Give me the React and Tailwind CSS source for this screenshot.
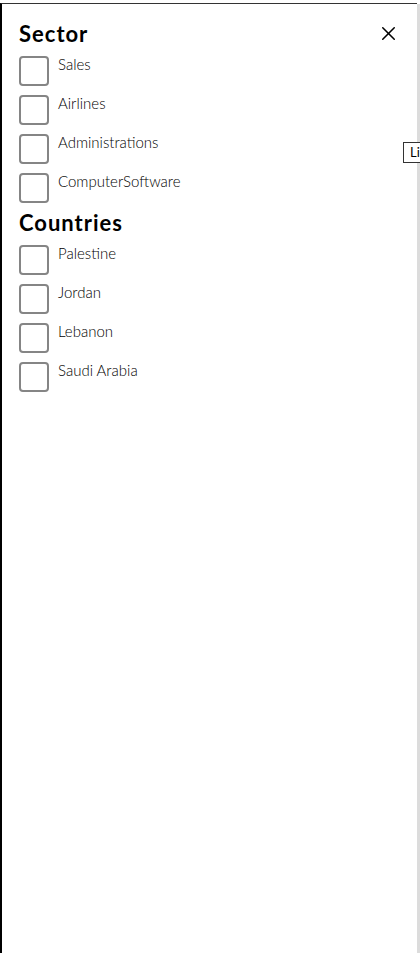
import { X } from "lucide-react";

const sectors = ["Sales", "Airlines", "Administrations", "ComputerSoftware"];
const countries = ["Palestine", "Jordan", "Lebanon", "Saudi Arabia"];

const CheckRow = ({ label }) => (
  <label className="flex items-start gap-[9px] h-[30px]">
    <span className="w-[30px] h-[30px] shrink-0 rounded-[4px] border-2 border-[#858585] bg-white" />
    <span className="text-[15px] leading-[16px] font-light text-black">{label}</span>
  </label>
);

const Group = ({ title, items }) => (
  <div>
    <h2 className="text-[22px] leading-[26px] font-bold text-black tracking-[1px]">{title}</h2>
    <div className="mt-[9px] flex flex-col gap-[9px]">
      {items.map((it) => (
        <CheckRow key={it} label={it} />
      ))}
    </div>
  </div>
);

export default function App() {
  return (
    <div
      className="w-[420px] h-[953px] bg-white pt-[3px] overflow-hidden relative"
      style={{ fontFamily: "Lato, 'Open Sans', sans-serif" }}
    >
      <div className="flex h-full">
        <div className="flex-1 border-t border-t-[#333] border-l-2 border-l-black relative">
          <div className="pl-[17px] pt-[17px] flex flex-col gap-[7px]">
            <Group title="Sector" items={sectors} />
            <Group title="Countries" items={countries} />
          </div>
          <button className="absolute top-[18px] right-[17px] text-black">
            <X size={23} strokeWidth={1.6} />
          </button>
        </div>
        <div className="w-[3px] mt-[1px] bg-[#dcdcdc]" />
      </div>
      <div className="absolute left-[403px] top-[142px] h-[21px] border border-[#333] bg-white px-[6px] text-[13px] leading-[19px] text-black whitespace-nowrap">
        Link
      </div>
    </div>
  );
}
